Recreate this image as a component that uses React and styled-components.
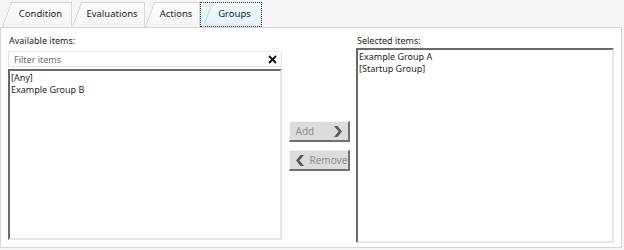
import React from "react";
import styled, { createGlobalStyle } from "styled-components";

const GlobalStyle = createGlobalStyle`
    html, body {
        margin: 0;
        padding: 0;
        background: #ffffff;
    }
    body {
        font-family: "Noto Sans", "Open Sans", sans-serif;
        font-size: 9px;
        color: #1e1e1e;
    }
`;

const Window = styled.div`
    width: 624px;
    height: 250px;
    display: flex;
    flex-direction: column;
    background: #f7f4f7;
    box-sizing: border-box;
`;

const TabStrip = styled.div`
    height: 27px;
    display: flex;
    align-items: flex-end;
    padding-left: 2px;
    box-sizing: border-box;
`;

const Tab = styled.div`
    position: relative;
    height: 25px;
    width: ${p => p.$w}px;
    display: flex;
    align-items: center;
    justify-content: center;
    padding: 0 0 4px 8px;
    box-sizing: border-box;
    font-size: 9.5px;
    color: #1e1e1e;
    background: ${p => p.$active
        ? "linear-gradient(#f3fafe, #dff2fc)"
        : "linear-gradient(#fdfdfd, #f4f4f4)"};
    border-top: 1px solid ${p => p.$active ? "transparent" : "#d8d8d8"};
    border-right: 1px solid ${p => p.$active ? "transparent" : "#d8d8d8"};
    clip-path: ${p => p.$active ? "none" : "polygon(0 100%, 9px 0, 100% 0, 100% 100%)"};
    outline: ${p => p.$active ? "1px dotted #333" : "none"};
    outline-offset: -1px;

    &::before {
        content: "";
        position: absolute;
        left: ${p => p.$active ? 3 : 0}px;
        bottom: 0;
        width: 1px;
        height: 26px;
        background: #cfcfcf;
        transform-origin: bottom left;
        transform: skewX(-20deg);
    }
`;

const Panel = styled.div`
    flex: 1;
    margin: 0 2px 2px 0;
    background: #ffffff;
    border: 1px solid #d6d6d6;
    display: grid;
    grid-template-columns: 274px 74px 258px;
    padding: 7px 0 0 7px;
    box-sizing: border-box;
`;

const Column = styled.div`
    display: flex;
    flex-direction: column;
`;

const Label = styled.div`
    height: 13px;
    line-height: 12px;
    padding-left: 1px;
    color: #1e1e1e;
`;

const FilterBox = styled.div`
    margin-top: 3px;
    height: 16px;
    display: flex;
    align-items: center;
    justify-content: space-between;
    border: 1px solid #e2e2e2;
    border-top-color: #eaeaea;
    padding: 0 4px 0 5px;
    box-sizing: border-box;
    color: #6d6d6d;
`;

const ClearIcon = styled.svg`
    width: 9px;
    height: 9px;
`;

const ListBox = styled.div`
    flex: 1;
    margin-top: ${p => p.$gap}px;
    margin-bottom: ${p => p.$bottom}px;
    border-top: 2px solid #6a6a6a;
    border-left: 2px solid #6a6a6a;
    border-right: 2px solid #e6e6e6;
    border-bottom: 2px solid #e6e6e6;
    padding: 1px 1px;
    box-sizing: border-box;
    line-height: 12px;
`;

const Item = styled.div`
    white-space: nowrap;
`;

const Middle = styled.div`
    display: flex;
    flex-direction: column;
    align-items: center;
    padding-top: 86px;
    gap: 8px;
`;

const Button = styled.div`
    width: 61px;
    height: 21px;
    display: flex;
    align-items: center;
    justify-content: ${p => p.$iconLeft ? "flex-start" : "space-between"};
    gap: 5px;
    padding: 0 6px 0 6px;
    box-sizing: border-box;
    background: #dcdcdc;
    border-top: 1px solid #f4f4f4;
    border-left: 1px solid #f4f4f4;
    border-right: 2px solid #6f6f6f;
    border-bottom: 2px solid #6f6f6f;
    font-size: 10px;
    color: #8c8c8c;
`;

const Chevron = styled.svg`
    flex-shrink: 0;
    width: 9px;
    height: 11px;
`;

const ChevronRight = () => (
    <Chevron viewBox="0 0 9 11">
        <path d="M1 0 L4.5 0 L9 5.5 L4.5 11 L1 11 L5.5 5.5 Z" fill="#5a5a5a" />
    </Chevron>
);

const ChevronLeft = () => (
    <Chevron viewBox="0 0 9 11">
        <path d="M8 0 L4.5 0 L0 5.5 L4.5 11 L8 11 L3.5 5.5 Z" fill="#5a5a5a" />
    </Chevron>
);

const tabs = [
    { name: "Condition", w: 70 },
    { name: "Evaluations", w: 73 },
    { name: "Actions", w: 55 },
    { name: "Groups", w: 62, active: true },
];

export default function App() {
    return (
        <Window>
            <GlobalStyle />
            <TabStrip>
                {tabs.map(t => (
                    <Tab key={t.name} $w={t.w} $active={t.active}>{t.name}</Tab>
                ))}
            </TabStrip>
            <Panel>
                <Column>
                    <Label>Available items:</Label>
                    <FilterBox>
                        <span>Filter items</span>
                        <ClearIcon viewBox="0 0 9 9">
                            <path d="M1 1 L8 8 M8 1 L1 8" stroke="#111" strokeWidth="1.8" />
                        </ClearIcon>
                    </FilterBox>
                    <ListBox $gap={2} $bottom={7}>
                        <Item>[Any]</Item>
                        <Item>Example Group B</Item>
                    </ListBox>
                </Column>
                <Middle>
                    <Button>
                        <span>Add</span>
                        <ChevronRight />
                    </Button>
                    <Button $iconLeft>
                        <ChevronLeft />
                        <span>Remove</span>
                    </Button>
                </Middle>
                <Column>
                    <Label>Selected items:</Label>
                    <ListBox $gap={0} $bottom={4}>
                        <Item>Example Group A</Item>
                        <Item>[Startup Group]</Item>
                    </ListBox>
                </Column>
            </Panel>
        </Window>
    );
}
